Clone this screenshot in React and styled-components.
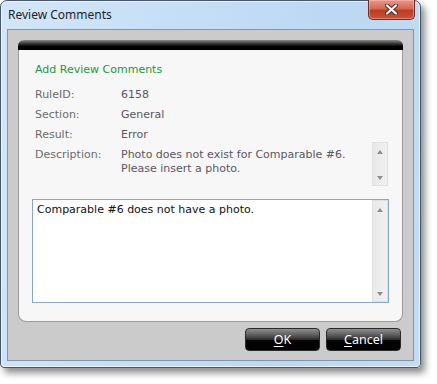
import React from "react";
import styled, { createGlobalStyle } from "styled-components";

const Global = createGlobalStyle`
  html, body { margin: 0; padding: 0; background: #ffffff; }
  #root { width: 437px; height: 384px; }
`;

const Window = styled.div`
  box-sizing: border-box;
  width: 421px;
  height: 368px;
  border: 1px solid #46576b;
  border-radius: 7px 7px 4px 4px;
  background: linear-gradient(100deg, #d3e6f8 0%, #c6dff6 35%, #bcd8f2 70%, #c3dcf4 100%);
  box-shadow: 4px 5px 7px rgba(0, 0, 0, 0.45), inset 0 0 0 1px rgba(255,255,255,0.6);
  display: flex;
  flex-direction: column;
  font-family: "DejaVu Sans", Tahoma, sans-serif;
`;

const TitleBar = styled.div`
  height: 28px;
  display: flex;
  align-items: flex-start;
  padding-left: 7px;
  flex-shrink: 0;
`;

const Title = styled.span`
  margin-top: 6px;
  font-family: "Noto Sans", "Segoe UI", sans-serif;
  font-size: 12px;
  line-height: 16px;
  color: #1e1e1e;
`;

const CloseButton = styled.div`
  margin-left: auto;
  margin-right: 5px;
  margin-top: -1px;
  width: 47px;
  height: 20px;
  box-sizing: border-box;
  border: 1px solid #6e2a22;
  border-top: none;
  border-radius: 0 0 5px 5px;
  background: linear-gradient(to bottom, #e59a88 0%, #d6684f 45%, #bf3a24 55%, #c9533a 100%);
  box-shadow: inset 0 0 0 1px rgba(255, 200, 190, 0.45);
  display: flex;
  align-items: center;
  justify-content: center;
`;

const Client = styled.div`
  flex: 1;
  margin: 0 6px 6px 6px;
  border: 1px solid #8196ae;
  background: #cbcbcb;
  display: flex;
  flex-direction: column;
`;

const Panel = styled.div`
  margin: 10px 10px 0 10px;
  height: 282px;
  box-sizing: border-box;
  background: #f7f7f7;
  border: 1px solid #9c9c9c;
  border-top: none;
  border-radius: 6px 6px 8px 8px;
  display: flex;
  flex-direction: column;
`;

const TopBar = styled.div`
  height: 10px;
  margin: 0 -1px;
  border-radius: 6px 6px 0 0;
  background: linear-gradient(to bottom, #8a8a8a 0%, #3a3a3a 35%, #000000 65%, #000000 100%);
`;

const Content = styled.div`
  padding: 13px 13px 0 13px;
  display: flex;
  flex-direction: column;
`;

const Heading = styled.div`
  padding-left: 3px;
  font-size: 11px;
  line-height: 14px;
  color: #22963a;
  margin-bottom: 11px;
`;

const InfoRow = styled.div`
  display: grid;
  grid-template-columns: 86px 1fr;
  padding-left: 3px;
  height: ${(p) => (p.$tall ? "43px" : "20px")};
  font-size: 11px;
  line-height: 14px;
`;

const Label = styled.span`
  color: #6b6b6b;
`;

const Value = styled.span`
  color: #5c5562;
`;

const DescBox = styled.div`
  display: flex;
  gap: 4px;
  margin-right: 1px;
  margin-top: -6px;
`;

const DescText = styled.div`
  flex: 1;
  padding-top: 6px;
  color: #5c5562;
`;

const ScrollBar = styled.div`
  width: 16px;
  box-sizing: border-box;
  height: ${(p) => p.$h}px;
  background: linear-gradient(to right, #e9e9e9, #f0f0f0);
  border: 1px solid #e0e0e0;
  display: flex;
  flex-direction: column;
  justify-content: space-between;
  align-items: center;
  padding: 7px 0 5px;
  flex-shrink: 0;
`;

const Arrow = styled.div`
  width: 0;
  height: 0;
  border-left: 3.5px solid transparent;
  border-right: 3.5px solid transparent;
  ${(p) =>
    p.$down
      ? "border-top: 4px solid #8c8c8c;"
      : "border-bottom: 4px solid #8c8c8c;"}
`;

const CommentBox = styled.div`
  margin-top: 8px;
  height: 104px;
  box-sizing: border-box;
  border: 1px solid #84a8cc;
  background: #ffffff;
  display: flex;
`;

const CommentText = styled.div`
  flex: 1;
  padding: 3px 4px;
  font-size: 11px;
  line-height: 14px;
  color: #111111;
`;

const ButtonRow = styled.div`
  display: flex;
  justify-content: flex-end;
  gap: 6px;
  margin-top: 6px;
  padding-right: 12px;
`;

const Button = styled.div`
  width: 75px;
  height: 23px;
  box-sizing: border-box;
  border: 1px solid #2a2a2a;
  border-radius: 4px;
  background: linear-gradient(to bottom, #8e8e8e 0%, #5a5a5a 30%, #2c2c2c 50%, #050505 55%, #000000 100%);
  color: #ffffff;
  font-family: "Noto Sans", "Segoe UI", sans-serif;
  font-size: 12.5px;
  display: flex;
  align-items: center;
  justify-content: center;
  u { text-decoration: underline; text-underline-offset: 2px; }
`;

function CloseGlyph() {
  return (
    <svg width="13" height="11" viewBox="0 0 13 11">
      <path d="M2 1.5 L11 9.5 M11 1.5 L2 9.5" stroke="#5a2a24" strokeWidth="4.2" strokeLinecap="round" />
      <path d="M2 1.5 L11 9.5 M11 1.5 L2 9.5" stroke="#ffffff" strokeWidth="2.2" strokeLinecap="round" />
    </svg>
  );
}

export default function App() {
  return (
    <>
      <Global />
      <Window>
        <TitleBar>
          <Title>Review Comments</Title>
          <CloseButton>
            <CloseGlyph />
          </CloseButton>
        </TitleBar>
        <Client>
          <Panel>
            <TopBar />
            <Content>
              <Heading>Add Review Comments</Heading>
              <InfoRow>
                <Label>RuleID:</Label>
                <Value>6158</Value>
              </InfoRow>
              <InfoRow>
                <Label>Section:</Label>
                <Value>General</Value>
              </InfoRow>
              <InfoRow>
                <Label>Result:</Label>
                <Value>Error</Value>
              </InfoRow>
              <InfoRow $tall>
                <Label>Description:</Label>
                <DescBox>
                  <DescText>
                    Photo does not exist for Comparable #6.
                    <br />
                    Please insert a photo.
                  </DescText>
                  <ScrollBar $h={44}>
                    <Arrow />
                    <Arrow $down />
                  </ScrollBar>
                </DescBox>
              </InfoRow>
              <CommentBox>
                <CommentText>Comparable #6 does not have a photo.</CommentText>
                <ScrollBar $h={102}>
                  <Arrow />
                  <Arrow $down />
                </ScrollBar>
              </CommentBox>
            </Content>
          </Panel>
          <ButtonRow>
            <Button>
              <u>O</u>K
            </Button>
            <Button>
              <u>C</u>ancel
            </Button>
          </ButtonRow>
        </Client>
      </Window>
    </>
  );
}
